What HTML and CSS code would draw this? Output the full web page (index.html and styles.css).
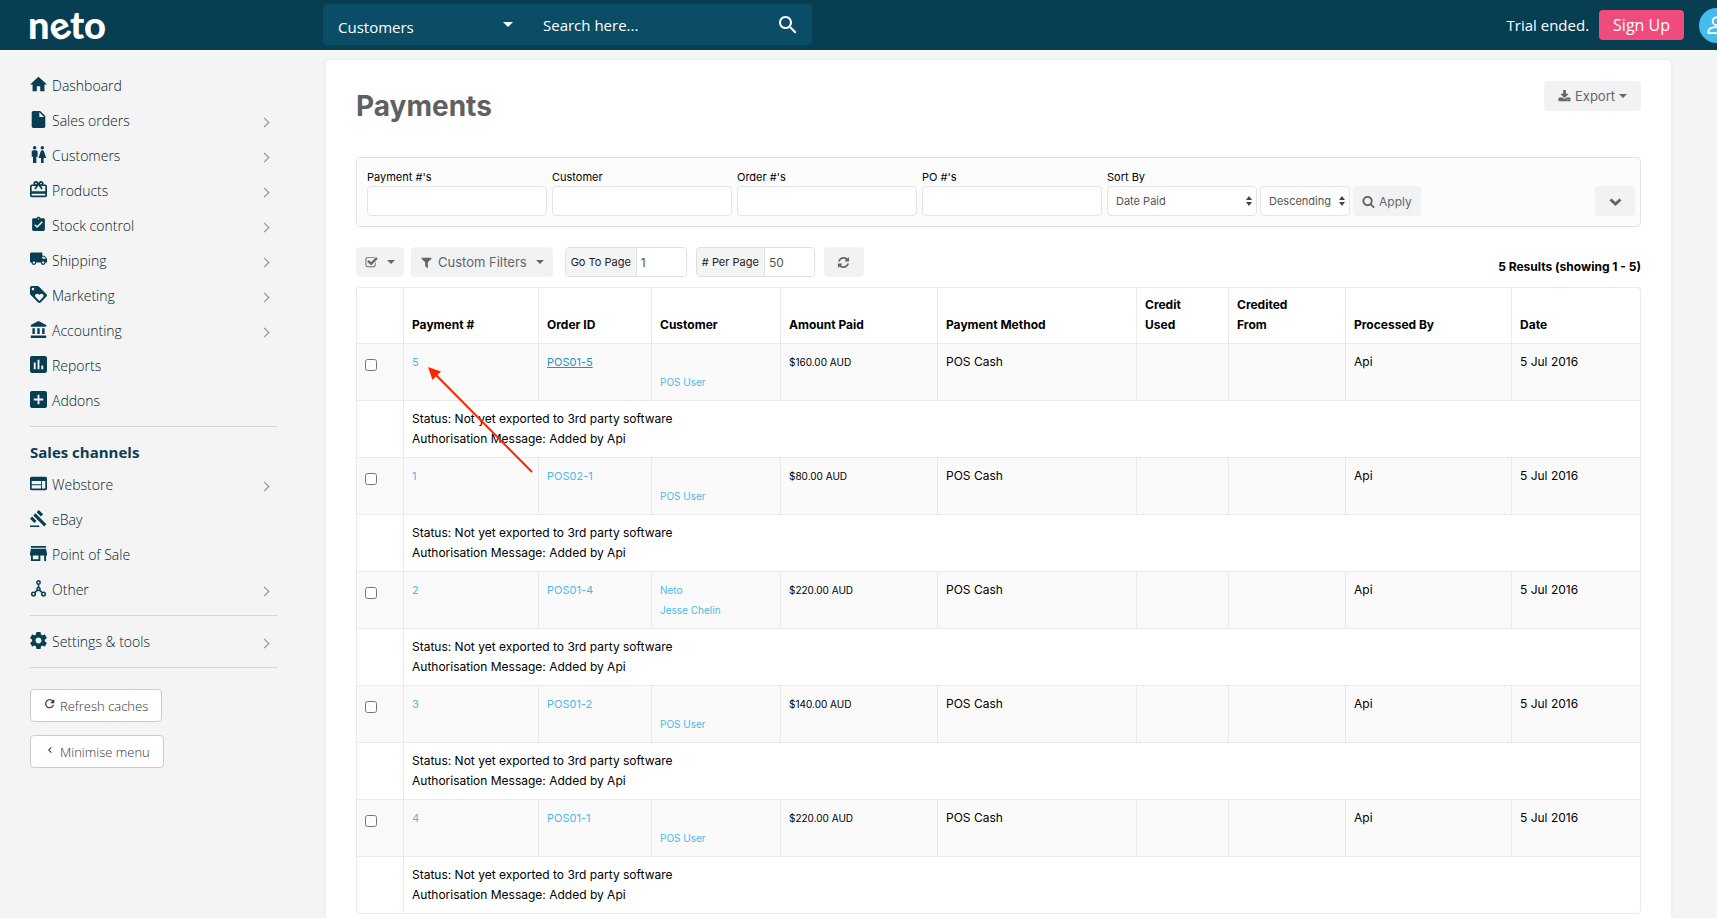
FILE: index.html
```html
<!DOCTYPE html>
<html lang="en">
<head>
  <meta charset="UTF-8">
  <meta name="viewport" content="width=device-width, initial-scale=1.0">
  <title>Payments - Neto</title>
  <link rel="stylesheet" href="styles.css">
</head>
<body>
  <!-- Top bar -->
  <header class="topbar">
    <a class="logo" href="#">n<span class="logo-e">e</span>to</a>
    <form class="search">
      <select class="search-type" aria-label="Search in">
        <option>Customers</option>
      </select>
      <input class="search-input" type="text" placeholder="Search here..." aria-label="Search">
      <button class="search-btn" type="button" aria-label="Search">
        <svg viewBox="3 3 18 18"><path d="M15.5 14h-.79l-.28-.27C15.41 12.59 16 11.11 16 9.5 16 5.91 13.09 3 9.5 3S3 5.91 3 9.5 5.91 16 9.5 16c1.61 0 3.09-.59 4.23-1.57l.27.28v.79l5 4.99L20.49 19l-4.99-5zm-6 0C7.01 14 5 11.99 5 9.5S7.01 5 9.5 5 14 7.01 14 9.5 11.99 14 9.5 14z"/></svg>
      </button>
    </form>
    <div class="account">
      <span>Trial ended.</span>
      <button class="signup" type="button">Sign Up</button>
      <a class="avatar" href="#" aria-label="My account">
        <svg viewBox="0 0 20 20"><circle cx="10" cy="5.5" r="4"/><path d="M1.5 18v-2c0-2.600 4-4.300 8.500-4.300s8.500 1.700 8.500 4.300v2z"/></svg>
      </a>
    </div>
  </header>

  <div class="layout">
    <!-- Sidebar -->
    <nav class="sidebar">
      <ul class="menu">
        <li><a href="#">
          <svg class="icon" viewBox="2 2 20 20"><path d="M10 20v-6h4v6h5v-8h3L12 3 2 12h3v8z"/></svg>Dashboard</a></li>
        <li><a class="more" href="#">
          <svg class="icon" viewBox="2 2 20 20"><path d="M6 2c-1.100 0-2 .9-2 2v16c0 1.100.9 2 2 2h12c1.100 0 2-.9 2-2V8l-6-6H6zm7 7V3.500L18.500 9H13z"/></svg>Sales orders</a></li>
        <li><a class="more" href="#">
          <svg class="icon" viewBox="2 2 20 20"><path d="M5.500 22v-7.500H4V9c0-1.100.9-2 2-2h3c1.100 0 2 .9 2 2v5.500H9.500V22h-4zM18 22v-6h3l-2.540-7.630C18.180 7.550 17.420 7 16.560 7h-.12c-.86 0-1.630.55-1.900 1.370L12 16h3v6h3zM7.500 6c1.110 0 2-.89 2-2s-.89-2-2-2-2 .89-2 2 .89 2 2 2zm9 0c1.110 0 2-.89 2-2s-.89-2-2-2-2 .89-2 2 .89 2 2 2z"/></svg>Customers</a></li>
        <li><a class="more" href="#">
          <svg class="icon" viewBox="2 2 20 20"><path d="M20 6h-2.180c.11-.31.18-.65.18-1 0-1.660-1.340-3-3-3-1.050 0-1.960.54-2.500 1.350l-.5.67-.5-.68C10.960 2.540 10.050 2 9 2 7.340 2 6 3.340 6 5c0 .35.07.69.18 1H4c-1.110 0-1.990.89-1.990 2L2 19c0 1.110.89 2 2 2h16c1.110 0 2-.89 2-2V8c0-1.110-.89-2-2-2zm-5-2c.55 0 1 .45 1 1s-.45 1-1 1-1-.45-1-1 .45-1 1-1zM9 4c.55 0 1 .45 1 1s-.45 1-1 1-1-.45-1-1 .45-1 1-1zm11 15H4v-2h16v2zm0-5H4V8h5.080L7 10.830 8.620 12 11 8.760l1-1.360 1 1.360L15.380 12 17 10.830 14.920 8H20v6z"/></svg>Products</a></li>
        <li><a class="more" href="#">
          <svg class="icon" viewBox="0 0 24 24"><path d="M19 3h-4.180C14.400 1.840 13.300 1 12 1c-1.300 0-2.400.84-2.820 2H5c-1.100 0-2 .9-2 2v14c0 1.100.9 2 2 2h14c1.100 0 2-.9 2-2V5c0-1.100-.9-2-2-2zm-7 0c.55 0 1 .45 1 1s-.45 1-1 1-1-.45-1-1 .45-1 1-1zm-2 14l-4-4 1.410-1.410L10 14.170l6.590-6.590L18 9l-8 8z"/></svg>Stock control</a></li>
        <li><a class="more" href="#">
          <svg class="icon" viewBox="1 2 22 22"><path d="M20 8h-3V4H3c-1.100 0-2 .9-2 2v11h2c0 1.660 1.340 3 3 3s3-1.340 3-3h6c0 1.660 1.340 3 3 3s3-1.340 3-3h2v-5l-3-4zM6 18.500c-.83 0-1.500-.67-1.500-1.500s.67-1.500 1.500-1.500 1.500.67 1.500 1.500-.67 1.500-1.500 1.500zm13.500-9l1.960 2.500H17V9.500h2.500zm-1.500 9c-.83 0-1.500-.67-1.500-1.500s.67-1.500 1.500-1.500 1.500.67 1.500 1.500-.67 1.500-1.500 1.500z"/></svg>Shipping</a></li>
        <li><a class="more" href="#">
          <svg class="icon" viewBox="2 2 20 20"><path d="M21.410 11.580l-9-9C12.050 2.220 11.550 2 11 2H4c-1.100 0-2 .9-2 2v7c0 .55.22 1.050.59 1.420l9 9c.36.36.86.58 1.410.58.55 0 1.050-.22 1.410-.59l7-7c.37-.36.59-.86.59-1.410 0-.55-.23-1.060-.59-1.420zM5.500 7C4.670 7 4 6.330 4 5.500S4.670 4 5.500 4 7 4.670 7 5.500 6.330 7 5.500 7zm11.770 8.270L13 19.540l-4.270-4.270C8.280 14.810 8 14.190 8 13.500c0-1.380 1.120-2.500 2.500-2.500.69 0 1.320.28 1.770.74l.73.72.73-.73c.45-.45 1.080-.73 1.770-.73 1.380 0 2.500 1.120 2.500 2.500 0 .69-.28 1.320-.73 1.770z"/></svg>Marketing</a></li>
        <li><a class="more" href="#">
          <svg class="icon" viewBox="1 1 21 21"><path d="M4 10v7h3v-7H4zm6 0v7h3v-7h-3zM2 22h19v-3H2v3zm14-12v7h3v-7h-3zm-4.500-9L2 6v2h19V6l-9.500-5z"/></svg>Accounting</a></li>
        <li><a href="#">
          <svg class="icon" viewBox="3 3 18 18"><path d="M19 3H5c-1.100 0-2 .9-2 2v14c0 1.100.9 2 2 2h14c1.100 0 2-.9 2-2V5c0-1.100-.9-2-2-2zM9 17H7v-7h2v7zm4 0h-2V7h2v10zm4 0h-2v-4h2v4z"/></svg>Reports</a></li>
        <li><a href="#">
          <svg class="icon" viewBox="3 3 18 18"><path d="M19 3H5c-1.110 0-2 .9-2 2v14c0 1.100.89 2 2 2h14c1.100 0 2-.9 2-2V5c0-1.100-.9-2-2-2zm-2 10h-4v4h-2v-4H7v-2h4V7h2v4h4v2z"/></svg>Addons</a></li>
      </ul>

      <h2 class="menu-title">Sales channels</h2>
      <ul class="menu">
        <li><a class="more" href="#">
          <svg class="icon" viewBox="2 2 20 20"><path d="M20 4H4c-1.100 0-1.990.9-1.990 2L2 18c0 1.100.9 2 2 2h16c1.100 0 2-.9 2-2V6c0-1.100-.9-2-2-2zm-5 14H4v-4h11v4zm0-5H4V9h11v4zm5 5h-4V9h4v9z"/></svg>Webstore</a></li>
        <li><a href="#">
          <svg class="icon" viewBox="1 1 22 22"><path d="M1 21h12v2H1zM5.245 8.070l2.830-2.827 14.140 14.142-2.828 2.828zM12.317 1l5.657 5.656-2.830 2.830-5.654-5.660zM3.825 9.485l5.657 5.657-2.828 2.828-5.657-5.657z"/></svg>eBay</a></li>
        <li><a href="#">
          <svg class="icon" viewBox="3 3 18 18"><path d="M20 4H4v2h16V4zm1 10v-2l-1-5H4l-1 5v2h1v6h10v-6h4v6h2v-6h1zm-9 4H6v-4h6v4z"/></svg>Point of Sale</a></li>
        <li><a class="more" href="#">
          <svg class="icon icon-line" viewBox="0 0 17 17"><circle cx="8.500" cy="2.500" r="1.700"/><circle cx="8.500" cy="9" r="1.500"/><circle cx="3.500" cy="14" r="1.800"/><circle cx="13.500" cy="14" r="1.800"/><path d="M8.500 4.200v3.300M7.400 10.100l-2.700 2.600M9.600 10.100l2.700 2.600"/></svg>Other</a></li>
      </ul>

      <ul class="menu menu-settings">
        <li><a class="more" href="#">
          <svg class="icon" viewBox="2 2 20 20"><path d="M19.430 12.980c.04-.32.07-.64.07-.98s-.03-.66-.07-.98l2.110-1.650c.19-.15.24-.42.12-.64l-2-3.460c-.12-.22-.39-.3-.61-.22l-2.490 1c-.52-.4-1.080-.73-1.690-.98l-.38-2.650C14.460 2.180 14.250 2 14 2h-4c-.25 0-.46.18-.49.42l-.38 2.650c-.61.25-1.170.59-1.690.98l-2.490-1c-.23-.09-.49 0-.61.22l-2 3.460c-.13.22-.07.49.12.64l2.110 1.650c-.04.32-.07.65-.07.98s.03.66.07.98l-2.110 1.650c-.19.15-.24.42-.12.64l2 3.460c.12.22.39.3.61.22l2.490-1c.52.4 1.080.73 1.690.98l.38 2.650c.03.24.24.42.49.42h4c.25 0 .46-.18.49-.42l.38-2.650c.61-.25 1.170-.59 1.690-.98l2.490 1c.23.09.49 0 .61-.22l2-3.460c.12-.22.07-.49-.12-.64l-2.110-1.650zM12 15.500c-1.930 0-3.500-1.570-3.500-3.500s1.570-3.500 3.500-3.500 3.500 1.570 3.500 3.500-1.570 3.500-3.500 3.500z"/></svg>Settings &amp; tools</a></li>
      </ul>

      <div class="side-buttons">
        <button class="side-btn" type="button">
          <svg viewBox="2 2 21 21"><path d="M17.650 6.350C16.200 4.900 14.210 4 12 4c-4.420 0-7.990 3.580-7.990 8s3.570 8 7.990 8c3.730 0 6.840-2.550 7.730-6h-2.080c-.82 2.330-3.040 4-5.650 4-3.310 0-6-2.690-6-6s2.690-6 6-6c1.660 0 3.140.69 4.220 1.780L13 11h7V4l-2.350 2.350z"/></svg>Refresh caches</button>
        <button class="side-btn" type="button">
          <svg viewBox="0 0 24 24"><path d="M15.400 7.400L14 6l-6 6 6 6 1.400-1.400L10.800 12z"/></svg>Minimise menu</button>
      </div>
    </nav>

    <!-- Payments panel -->
    <main class="panel">
      <div class="panel-head">
        <h1>Payments</h1>
        <button class="btn" type="button">
          <svg class="fa" viewBox="0 0 1792 1792"><path d="M1344 1344q0-26-19-45t-45-19-45 19-19 45 19 45 45 19 45-19 19-45zm256 0q0-26-19-45t-45-19-45 19-19 45 19 45 45 19 45-19 19-45zm128-224v320q0 40-28 68t-68 28h-1472q-40 0-68-28t-28-68v-320q0-40 28-68t68-28h465l135 136q58 56 136 56t136-56l136-136h464q40 0 68 28t28 68zm-325-569q17 41-14 70l-448 448q-18 19-45 19t-45-19l-448-448q-31-29-14-70 17-39 59-39h256v-448q0-26 19-45t45-19h256q26 0 45 19t19 45v448h256q42 0 59 39z"/></svg>
          Export<span class="caret"></span></button>
      </div>

      <form class="filters">
        <div class="field">
          <label for="f-payment">Payment #'s</label>
          <input id="f-payment" type="text">
        </div>
        <div class="field">
          <label for="f-customer">Customer</label>
          <input id="f-customer" type="text">
        </div>
        <div class="field">
          <label for="f-order">Order #'s</label>
          <input id="f-order" type="text">
        </div>
        <div class="field">
          <label for="f-po">PO #'s</label>
          <input id="f-po" type="text">
        </div>
        <div class="field">
          <label for="f-sort">Sort By</label>
          <div class="sort">
            <select id="f-sort" class="sort-by"><option>Date Paid</option></select>
            <select class="sort-dir" aria-label="Sort direction"><option>Descending</option></select>
            <button class="btn btn-apply" type="button">
              <svg class="fa" viewBox="0 0 1792 1792"><path d="M1216 832q0-185-131.500-316.500t-316.500-131.500-316.500 131.500-131.500 316.500 131.500 316.500 316.500 131.500 316.500-131.500 131.500-316.500zm512 832q0 52-38 90t-90 38q-54 0-90-38l-343-342q-179 124-399 124-143 0-273.500-55.500t-225-150-150-225-55.500-273.500 55.500-273.500 150-225 225-150 273.500-55.500 273.500 55.500 225 150 150 225 55.500 273.500q0 220-124 399l343 343q37 37 37 90z"/></svg>
              Apply</button>
          </div>
        </div>
        <button class="btn btn-icon btn-expand" type="button" aria-label="More filters">
          <svg class="fa fa-line" viewBox="0 0 13 13"><path d="M1.500 4.500l5 4.500 5-4.500"/></svg>
        </button>
      </form>

      <div class="toolbar">
        <button class="btn btn-select" type="button" aria-label="Select">
          <svg class="fa" viewBox="0 0 1792 1792"><path d="M1472 930v318q0 119-84.500 203.500t-203.500 84.500h-832q-119 0-203.500-84.500t-84.500-203.500v-832q0-119 84.500-203.500t203.500-84.500h832q63 0 117 25 15 7 18 23 3 17-9 29l-49 49q-10 10-23 10-3 0-9-2-23-6-45-6h-832q-66 0-113 47t-47 113v832q0 66 47 113t113 47h832q66 0 113-47t47-113v-254q0-13 9-22l64-64q10-10 23-10 6 0 12 3 20 8 20 29zm231-489l-814 814q-24 24-57 24t-57-24l-430-430q-24-24-24-57t24-57l110-110q24-24 57-24t57 24l263 263 647-647q24-24 57-24t57 24l110 110q24 24 24 57t-24 57z"/></svg>
          <span class="caret"></span></button>
        <button class="btn btn-filters" type="button">
          <svg class="fa" viewBox="0 0 1792 1792"><path d="M1595 295q17 41-14 70l-493 493v742q0 42-39 59-13 5-25 5-27 0-45-19l-256-256q-19-19-19-45v-486l-493-493q-31-29-14-70 17-39 59-39h1280q42 0 59 39z"/></svg>
          Custom Filters<span class="caret"></span></button>
        <div class="input-group">
          <label for="page-no">Go To Page</label>
          <input id="page-no" type="text" value="1">
        </div>
        <div class="input-group">
          <label for="per-page"># Per Page</label>
          <input id="per-page" type="text" value="50">
        </div>
        <button class="btn btn-icon" type="button" aria-label="Refresh">
          <svg class="fa" viewBox="0 0 1792 1792"><path d="M1639 1056q0 5-1 7-64 268-268 434.500t-478 166.500q-146 0-282.500-55t-243.500-157l-129 129q-19 19-45 19t-45-19-19-45v-448q0-26 19-45t45-19h448q26 0 45 19t19 45-19 45l-137 137q71 66 161 102t187 36q134 0 250-65t186-179q11-17 53-117 8-23 30-23h192q13 0 22.500 9.500t9.500 22.500zm25-800v448q0 26-19 45t-45 19h-448q-26 0-45-19t-19-45 19-45l138-138q-148-137-349-137-134 0-250 65t-186 179q-11 17-53 117-8 23-30 23h-199q-13 0-22.500-9.500t-9.500-22.500v-7q65-268 270-434.500t480-166.500q146 0 284 55.500t245 156.500l130-129q19-19 45-19t45 19 19 45z"/></svg>
        </button>
        <strong class="results">5 Results (showing 1 - 5)</strong>
      </div>

      <div class="table-wrap">
        <table class="payments">
          <colgroup>
            <col class="c-check"><col class="c-payment"><col class="c-order"><col class="c-customer"><col class="c-amount">
            <col class="c-method"><col class="c-credit"><col class="c-from"><col class="c-by"><col class="c-date">
          </colgroup>
          <thead>
            <tr>
              <th></th>
              <th>Payment #</th>
              <th>Order ID</th>
              <th>Customer</th>
              <th>Amount Paid</th>
              <th>Payment Method</th>
              <th>Credit<br>Used</th>
              <th>Credited<br>From</th>
              <th>Processed By</th>
              <th>Date</th>
            </tr>
          </thead>
          <tbody>
            <tr class="row">
              <td><input type="checkbox" aria-label="Payment 5"></td>
              <td><a href="#">5</a></td>
              <td><a class="hovered" href="#">POS01-5</a></td>
              <td class="small"><br><a href="#">POS User</a></td>
              <td class="small">$160.00 AUD</td>
              <td>POS Cash</td><td></td><td></td>
              <td>Api</td>
              <td>5 Jul 2016</td>
            </tr>
            <tr>
              <td></td>
              <td colspan="9">Status: Not yet exported to 3rd party software<br>Authorisation Message: Added by Api</td>
            </tr>
            <tr class="row">
              <td><input type="checkbox" aria-label="Payment 1"></td>
              <td><a href="#">1</a></td>
              <td><a href="#">POS02-1</a></td>
              <td class="small"><br><a href="#">POS User</a></td>
              <td class="small">$80.00 AUD</td>
              <td>POS Cash</td><td></td><td></td>
              <td>Api</td>
              <td>5 Jul 2016</td>
            </tr>
            <tr>
              <td></td>
              <td colspan="9">Status: Not yet exported to 3rd party software<br>Authorisation Message: Added by Api</td>
            </tr>
            <tr class="row">
              <td><input type="checkbox" aria-label="Payment 2"></td>
              <td><a href="#">2</a></td>
              <td><a href="#">POS01-4</a></td>
              <td class="small"><a href="#">Neto</a><br><a href="#">Jesse Chelin</a></td>
              <td class="small">$220.00 AUD</td>
              <td>POS Cash</td><td></td><td></td>
              <td>Api</td>
              <td>5 Jul 2016</td>
            </tr>
            <tr>
              <td></td>
              <td colspan="9">Status: Not yet exported to 3rd party software<br>Authorisation Message: Added by Api</td>
            </tr>
            <tr class="row">
              <td><input type="checkbox" aria-label="Payment 3"></td>
              <td><a href="#">3</a></td>
              <td><a href="#">POS01-2</a></td>
              <td class="small"><br><a href="#">POS User</a></td>
              <td class="small">$140.00 AUD</td>
              <td>POS Cash</td><td></td><td></td>
              <td>Api</td>
              <td>5 Jul 2016</td>
            </tr>
            <tr>
              <td></td>
              <td colspan="9">Status: Not yet exported to 3rd party software<br>Authorisation Message: Added by Api</td>
            </tr>
            <tr class="row">
              <td><input type="checkbox" aria-label="Payment 4"></td>
              <td><a href="#">4</a></td>
              <td><a href="#">POS01-1</a></td>
              <td class="small"><br><a href="#">POS User</a></td>
              <td class="small">$220.00 AUD</td>
              <td>POS Cash</td><td></td><td></td>
              <td>Api</td>
              <td>5 Jul 2016</td>
            </tr>
            <tr>
              <td></td>
              <td colspan="9">Status: Not yet exported to 3rd party software<br>Authorisation Message: Added by Api</td>
            </tr>
          </tbody>
        </table>

        <!-- Red arrow pointing at the first payment -->
        <svg class="arrow" viewBox="0 0 108 108"><path class="arrow-line" d="M6 6l97.500 98.500"/><path class="arrow-head" d="M0 0l13 4.500-8.500 8.500z"/></svg>
      </div>
    </main>
  </div>
</body>
</html>
```
FILE: styles.css
```css
* {
  box-sizing: border-box;
}

body {
  margin: 0;
  height: 100vh;
  display: flex;
  flex-direction: column;
  overflow: hidden;
  background: #f4f4f4;
  font-family: Inter, sans-serif;
  font-size: 12px;
  line-height: 20px;
  color: #000;
}

button, input, select {
  font-family: inherit;
  margin: 0;
}

button {
  cursor: pointer;
}

a {
  color: #4ab9ea;
  text-decoration: none;
}

/* Top bar */
.topbar {
  flex: none;
  height: 50px;
  display: flex;
  align-items: center;
  background: #083e52;
  color: #fff;
  font-family: "Open Sans", sans-serif;
}

.logo {
  width: 323px;
  padding: 0 0 2px 28px;
  font-family: Lato, sans-serif;
  font-weight: 900;
  font-size: 38px;
  line-height: 40px;
  color: #fff;
}

.logo-e {
  display: inline-block;
  transform: rotate(-25deg);
  transform-origin: 50% 64%;
}

.search {
  width: 489px;
  height: 41px;
  margin-bottom: 1px;
  display: flex;
  align-items: center;
  background: #0b4d67;
  border-radius: 4px;
}

.search-type, .search-input {
  height: 41px;
  border: 0;
  color: #fff;
  font-size: 15px;
  background: none;
}

.search-type {
  appearance: none;
  width: 205px;
  padding: 5px 15px 0;
  background: url("data:image/svg+xml,%3Csvg xmlns='http://www.w3.org/2000/svg' width='10' height='5'%3E%3Cpath fill='white' d='M0 0h10L5 5z'/%3E%3C/svg%3E") no-repeat right 15px center;
}

.search-input {
  flex: 1;
  min-width: 0;
  padding: 0 15px;
}

.search-input::placeholder {
  color: #fff;
}

.search-btn {
  width: 48px;
  height: 41px;
  padding: 0 15px;
  border: 0;
  background: none;
}

.search-btn svg {
  display: block;
  width: 18px;
  height: 18px;
  fill: #fff;
}

.account {
  margin-left: auto;
  display: flex;
  align-items: center;
  font-size: 15px;
}

.signup {
  height: 30px;
  margin: 0 15px 0 10px;
  padding: 0 14px;
  border: 0;
  border-radius: 4px;
  background: #f04b7d;
  color: #fff;
  font-size: 16px;
}

.avatar {
  width: 35px;
  height: 35px;
  margin-right: -17px;
  padding: 8px;
  border-radius: 50%;
  background: #44bdee;
}

.avatar svg {
  display: block;
  width: 19px;
  height: 19px;
  fill: none;
  stroke: #fff;
  stroke-width: 2;
}

/* Sidebar */
.layout {
  flex: 1;
  min-height: 0;
  display: flex;
}

.sidebar {
  flex: none;
  width: 326px;
  padding: 18px 49px 0 30px;
  font-family: "Open Sans", sans-serif;
  font-size: 14px;
}

.menu {
  margin: 0;
  padding: 0 0 8px;
  list-style: none;
  border-bottom: 1px solid #d6d6d6;
}

.menu a {
  display: flex;
  align-items: center;
  height: 35px;
  color: #04222e;
  font-weight: 300;
}

.menu .more::after {
  content: "";
  width: 6px;
  height: 6px;
  margin: 3px 9px 0 auto;
  border: solid #888;
  border-width: 1px 1px 0 0;
  transform: rotate(45deg);
}

.icon {
  width: 17px;
  height: 17px;
  margin: 0 5px 3px 0;
  fill: #083e52;
}

.icon-line {
  fill: none;
  stroke: #083e52;
  stroke-width: 1.5;
}

.menu-title {
  margin: 15px 0 5px;
  font-size: 15px;
  line-height: 20px;
  color: #083e52;
}

.menu-settings {
  padding-top: 8px;
}

.side-buttons {
  display: flex;
  flex-direction: column;
  align-items: flex-start;
  gap: 13px;
  padding-top: 21px;
}

.side-btn {
  display: flex;
  align-items: center;
  height: 33px;
  padding: 0 13px;
  border: 1px solid #ccc;
  border-radius: 4px;
  background: #fff;
  color: #333;
  font-size: 13px;
  font-weight: 300;
}

.side-btn svg {
  width: 12px;
  height: 12px;
  margin: 0 4px 3px 0;
  fill: #333;
}

/* Panel */
.panel {
  flex: 1;
  min-width: 0;
  margin: 10px 46px 0 0;
  padding: 21px 30px 30px;
  background: #fff;
  border-radius: 4px 4px 0 0;
  box-shadow: 0 0 4px rgba(0, 0, 0, 0.06);
  overflow-y: auto;
  scrollbar-width: none;
}

.panel-head {
  display: flex;
  justify-content: space-between;
  align-items: flex-start;
}

h1 {
  margin: 5px 0 31px;
  font-size: 28px;
  line-height: 40px;
  font-weight: 700;
  color: #5f6062;
}

.btn {
  display: inline-flex;
  align-items: center;
  height: 30px;
  padding: 0 14px;
  border: 0;
  border-radius: 4px;
  background: #f1f2f4;
  color: #666;
  font-size: 13px;
  white-space: nowrap;
}

.fa {
  flex: none;
  width: 13px;
  height: 13px;
  margin-right: 4px;
  fill: #666;
}

.fa-line {
  fill: none;
  stroke: #666;
  stroke-width: 3;
}

.caret {
  margin-left: 4px;
  border: 4px solid transparent;
  border-top-color: #666;
  border-bottom: 0;
}

.btn-icon {
  width: 40px;
  justify-content: center;
  padding: 0;
}

.btn-icon .fa {
  margin: 0;
}

/* Filters */
.filters {
  display: flex;
  align-items: flex-end;
  gap: 5px;
  padding: 10px 5px 10px 10px;
  border: 1px solid #e2e2e2;
  border-radius: 4px;
  background: #fcfcfc;
}

.field label {
  display: block;
  font-size: 11px;
  line-height: 18px;
}

.field input {
  display: block;
  width: 180px;
}

.field input, .field select {
  height: 30px;
  border: 1px solid #e4e4e4;
  border-radius: 4px;
  background-color: #fff;
  color: #555;
  font-size: 11px;
}

.field select {
  appearance: none;
  padding: 0 8px;
  background-image: url("data:image/svg+xml,%3Csvg xmlns='http://www.w3.org/2000/svg' width='6' height='10'%3E%3Cpath fill='%23444' d='M3 0l3 4H0zM3 10L0 6h6z'/%3E%3C/svg%3E");
  background-repeat: no-repeat;
  background-position: right 4px center;
}

.sort {
  display: flex;
  gap: 3px;
}

.sort-by {
  width: 150px;
}

.sort-dir {
  width: 90px;
}

.btn-apply {
  padding: 0 9px;
  font-size: 12px;
}

.btn-expand {
  margin-left: auto;
}

/* Toolbar */
.toolbar {
  display: flex;
  align-items: center;
  margin: 20px 0 10px;
}

.btn-select {
  margin-right: 7px;
  padding: 0 9px;
}

.btn-select .caret {
  margin-left: 5px;
}

.btn-filters {
  margin-right: 12px;
  padding: 0 9px;
}

.btn-filters .fa {
  margin-right: 5px;
}

.btn-filters .caret {
  margin-left: 9px;
}

.input-group {
  display: flex;
  height: 30px;
  margin-right: 9px;
  border: 1px solid #e0e0e0;
  border-radius: 4px;
  overflow: hidden;
}

.input-group label {
  padding: 0 5px;
  background: #f4f4f4;
  border-right: 1px solid #e0e0e0;
  font-size: 11px;
  line-height: 28px;
  color: #222;
}

.input-group input {
  width: 49px;
  padding: 0 4px;
  border: 0;
  color: #555;
  font-size: 12px;
}

.results {
  margin: 10px 0 0 auto;
  font-weight: 700;
}

/* Table */
.table-wrap {
  position: relative;
}

.payments {
  width: 100%;
  table-layout: fixed;
  border-collapse: separate;
  border-spacing: 0;
  border: 1px solid #eaeaea;
  border-width: 1px 1px 0 0;
  border-radius: 4px;
}

.payments th, .payments td {
  padding: 8px;
  border: solid #eaeaea;
  border-width: 0 0 1px 1px;
  text-align: left;
  vertical-align: top;
}

.payments th {
  padding-top: 7px;
  vertical-align: bottom;
  font-weight: 700;
}

.payments tr:last-child td:first-child {
  border-bottom-left-radius: 4px;
}

.payments tr:last-child td:last-child {
  border-bottom-right-radius: 4px;
}

.row td {
  background: #fafafa;
}

.row a {
  font-size: 11px;
}

.row .small, .small a {
  font-size: 10px;
}

.row .hovered {
  color: #1e93c6;
  text-decoration: underline;
}

.row input {
  display: block;
  width: 12px;
  height: 12px;
  margin-top: 7px;
}

.c-check { width: 47px; }
.c-payment { width: 135px; }
.c-order { width: 113px; }
.c-customer { width: 129px; }
.c-amount { width: 157px; }
.c-method { width: 199px; }
.c-credit { width: 92px; }
.c-from { width: 117px; }
.c-by { width: 166px; }
.c-date { width: 129px; }

.arrow {
  position: absolute;
  top: 80px;
  left: 72px;
  width: 108px;
  height: 108px;
  pointer-events: none;
}

.arrow-line {
  stroke: #ff2600;
  stroke-width: 2;
  stroke-linecap: round;
}

.arrow-head {
  fill: #ff2600;
}
```
